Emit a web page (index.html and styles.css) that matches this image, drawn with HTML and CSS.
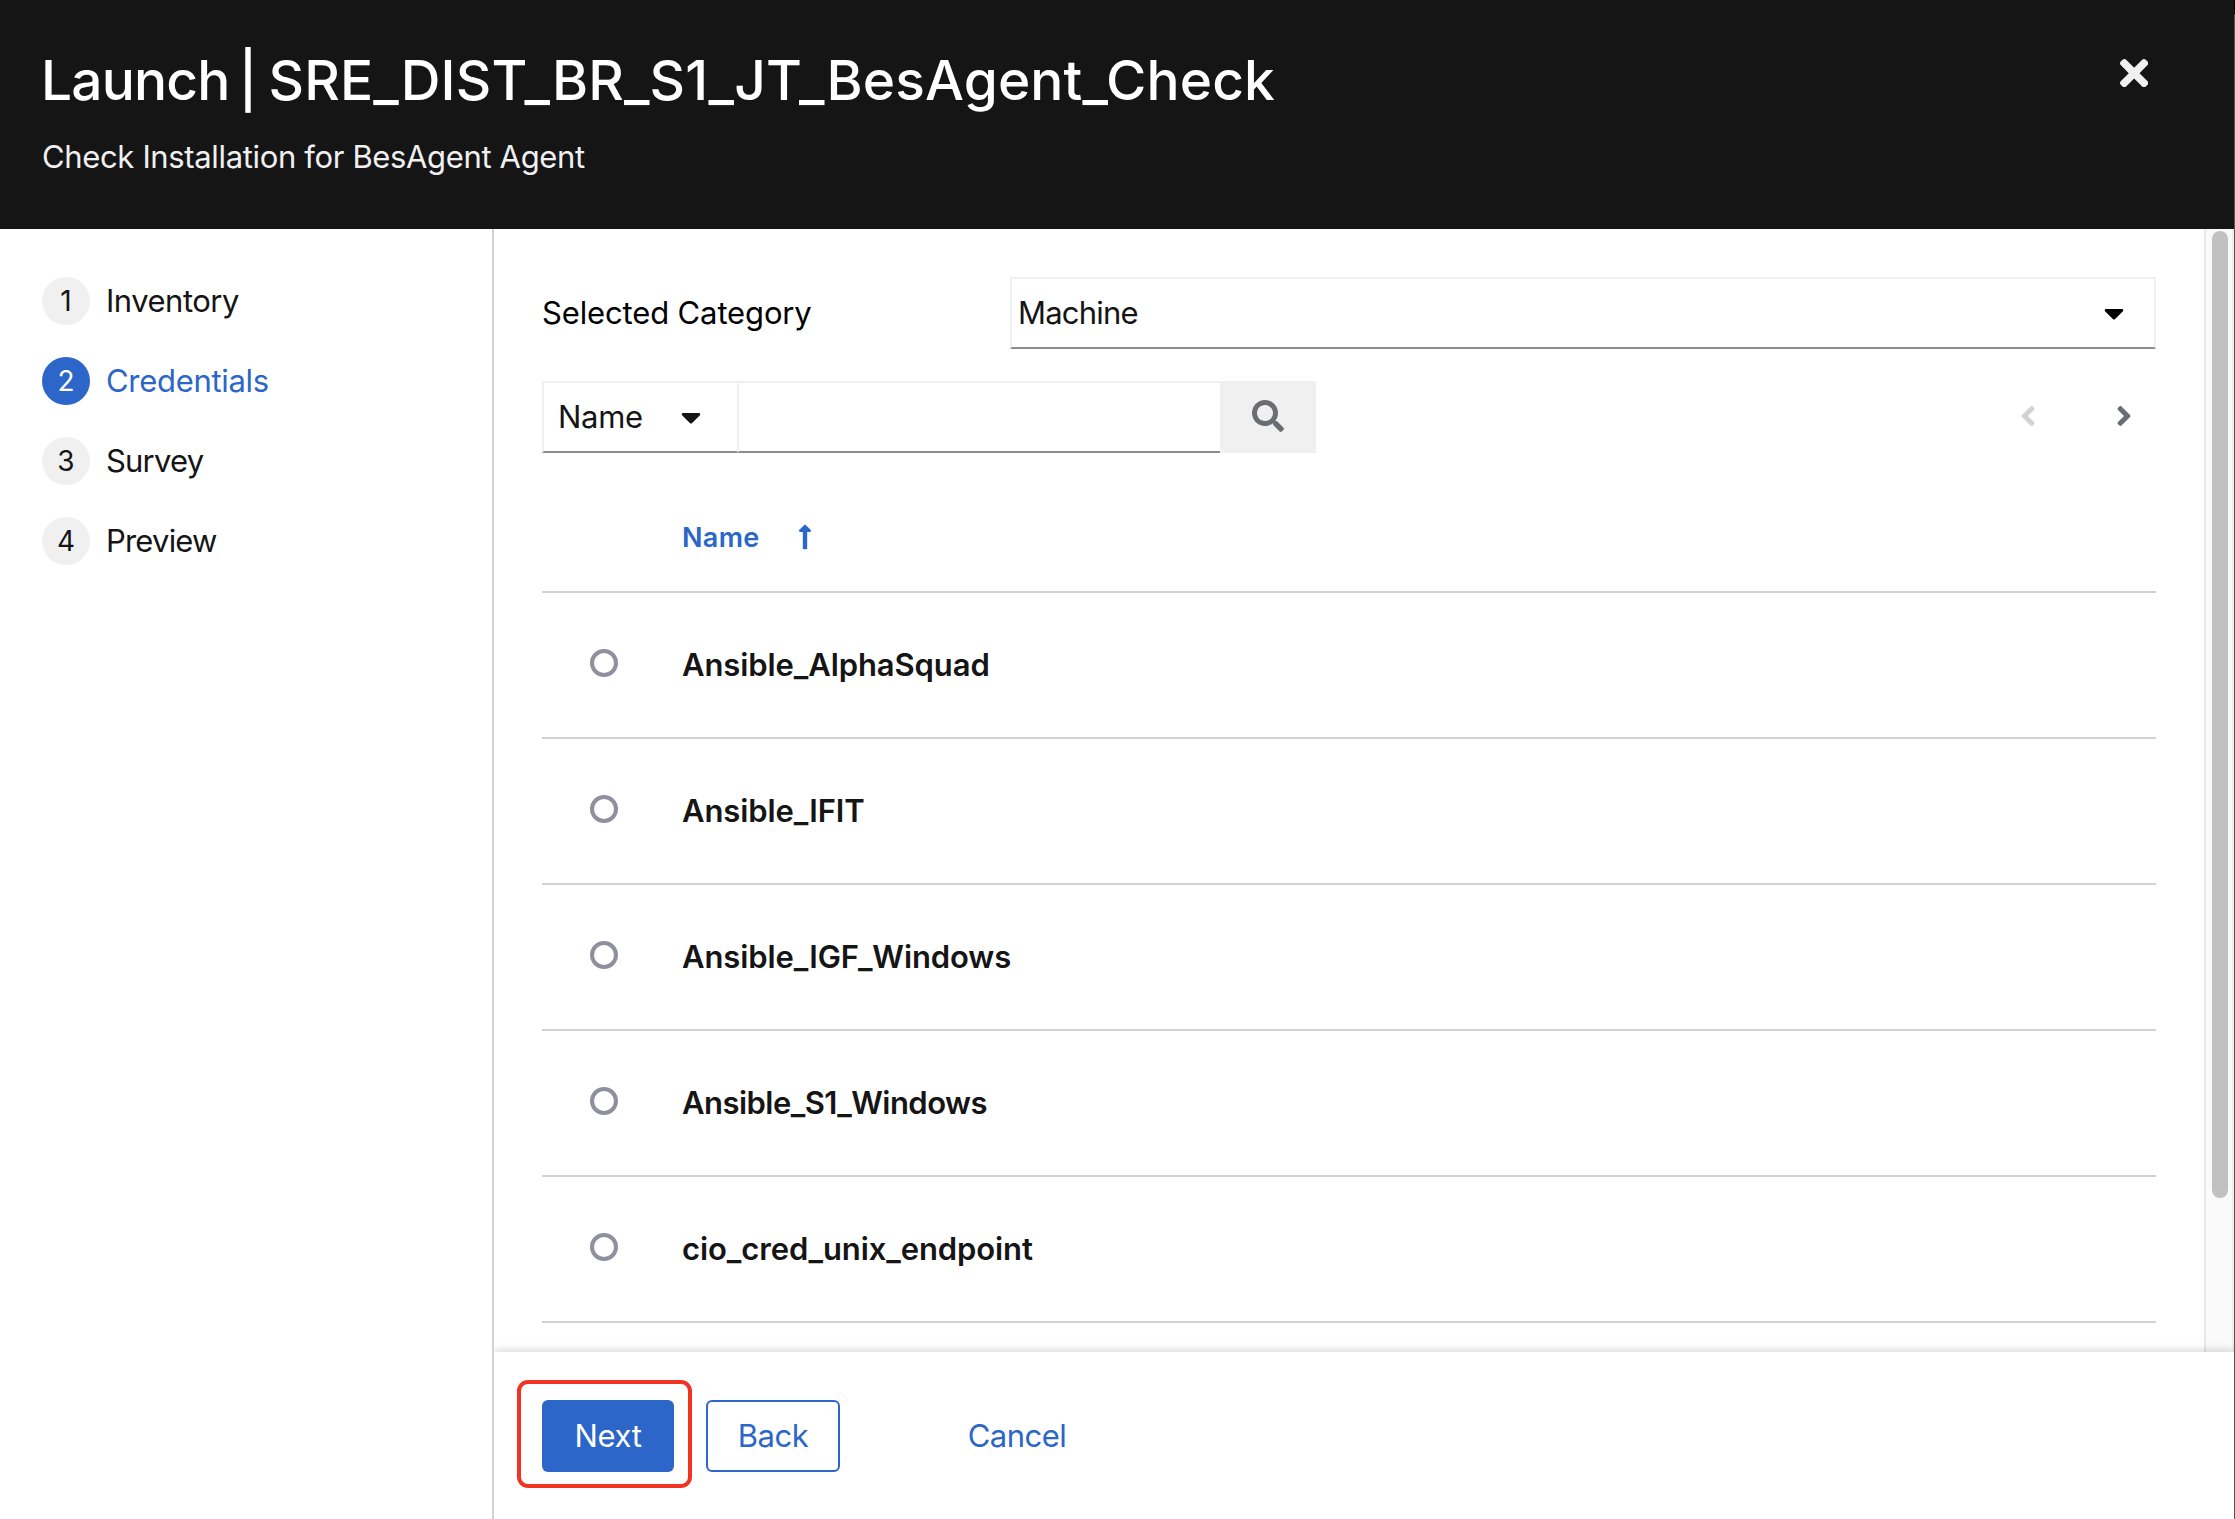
FILE: index.html
```html
<!DOCTYPE html>
<html lang="en">
<head>
<meta charset="utf-8">
<title>Launch | SRE_DIST_BR_S1_JT_BesAgent_Check</title>
<link rel="stylesheet" href="styles.css">
</head>
<body>
<div class="wizard">
  <header class="header">
    <div>
      <h1 class="title"><span class="action">Launch | </span><span class="template">SRE_DIST_BR_S1_JT_BesAgent_Check</span></h1>
      <p class="description">Check Installation for BesAgent Agent</p>
    </div>
    <button class="close" aria-label="Close"><svg viewBox="0 80 352 352" width="28.3" height="28.3"><path fill="currentColor" d="M242.72 256l100.07-100.07c12.28-12.28 12.28-32.19 0-44.48l-22.24-22.24c-12.28-12.28-32.19-12.28-44.48 0L176 189.28 75.93 89.21c-12.28-12.28-32.19-12.28-44.48 0L9.21 111.45c-12.28 12.28-12.28 32.19 0 44.48L109.28 256 9.21 356.07c-12.28 12.28-12.28 32.19 0 44.48l22.24 22.24c12.28 12.28 32.2 12.28 44.48 0L176 322.72l100.07 100.07c12.28 12.28 32.2 12.28 44.48 0l22.24-22.24c12.28-12.28 12.28-32.19 0-44.48L242.72 256z"/></svg></button>
  </header>
  <div class="body">
    <nav class="nav">
      <ol class="steps">
        <li class="step"><span class="num">1</span><span class="tight">Inventory</span></li>
        <li class="step current"><span class="num">2</span><span class="snug">Credentials</span></li>
        <li class="step"><span class="num">3</span><span class="tighter">Survey</span></li>
        <li class="step"><span class="num">4</span><span class="tighter">Preview</span></li>
      </ol>
    </nav>
    <div class="main">
      <div class="scroll">
        <main class="content">
          <div class="category">
            <label class="label">Selected Category</label>
            <div class="select"><span class="tighter">Machine</span><svg viewBox="0 0 320 512" width="20" height="32"><path fill="currentColor" d="M31.3 192h257.3c17.8 0 26.7 21.5 14.1 34.1L174.1 354.8c-7.8 7.8-20.5 7.8-28.3 0L17.2 226.1C4.6 213.5 13.5 192 31.3 192z"/></svg></div>
          </div>
          <div class="toolbar">
            <div class="filter">
              <button class="toggle"><span class="snug">Name</span><svg viewBox="0 0 320 512" width="20" height="32"><path fill="currentColor" d="M31.3 192h257.3c17.8 0 26.7 21.5 14.1 34.1L174.1 354.8c-7.8 7.8-20.5 7.8-28.3 0L17.2 226.1C4.6 213.5 13.5 192 31.3 192z"/></svg></button>
              <input class="search" type="text" aria-label="Search">
              <button class="go" aria-label="Search"><svg viewBox="0 0 512 512" width="32" height="32"><path fill="currentColor" d="M505 442.7L405.3 343c-4.5-4.5-10.6-7-17-7H372c27.6-35.3 44-79.7 44-128C416 93.1 322.9 0 208 0S0 93.1 0 208s93.1 208 208 208c48.3 0 92.7-16.4 128-44v16.3c0 6.4 2.5 12.5 7 17l99.7 99.7c9.4 9.4 24.6 9.4 33.9 0l28.3-28.3c9.4-9.4 9.4-24.6.1-34zM208 336c-70.7 0-128-57.2-128-128 0-70.7 57.2-128 128-128 70.7 0 128 57.2 128 128 0 70.7-57.2 128-128 128z"/></svg></button>
            </div>
            <div class="pager">
              <button class="page disabled" aria-label="Previous page"><svg viewBox="0 0 256 512" width="16" height="32"><path fill="currentColor" d="M31.7 239l136-136c9.4-9.4 24.6-9.4 33.9 0l22.6 22.6c9.4 9.4 9.4 24.6 0 33.9L127.9 256l96.4 96.4c9.4 9.4 9.4 24.6 0 33.9L201.7 409c-9.4 9.4-24.6 9.4-33.9 0l-136-136c-9.5-9.4-9.5-24.6-.1-34z"/></svg></button>
              <button class="page" aria-label="Next page"><svg viewBox="0 0 256 512" width="16" height="32"><path fill="currentColor" d="M224.3 273l-136 136c-9.4 9.4-24.6 9.4-33.9 0l-22.6-22.6c-9.4-9.4-9.4-24.6 0-33.9l96.4-96.4-96.4-96.4c-9.4-9.4-9.4-24.6 0-33.9L54.3 103c9.4-9.4 24.6-9.4 33.9 0l136 136c9.5 9.4 9.5 24.6.1 34z"/></svg></button>
            </div>
          </div>
          <div class="table">
            <div class="thead"><span class="sort">Name</span><svg viewBox="0 0 256 512" width="14" height="28"><path fill="currentColor" d="M88 166.059V468c0 6.627 5.373 12 12 12h56c6.627 0 12-5.373 12-12V166.059h46.059c21.382 0 32.09-25.851 16.971-40.971l-86.059-86.059c-9.373-9.373-24.569-9.373-33.941 0l-86.059 86.059c-15.119 15.119-4.411 40.971 16.971 40.971H88z"/></svg></div>
            <label class="row"><span class="radio"></span><span class="name">Ansible_AlphaSquad</span></label>
            <label class="row"><span class="radio"></span><span class="name">Ansible_IFIT</span></label>
            <label class="row"><span class="radio"></span><span class="name">Ansible_IGF_Windows</span></label>
            <label class="row"><span class="radio"></span><span class="name tight">Ansible_S1_Windows</span></label>
            <label class="row"><span class="radio"></span><span class="name">cio_cred_unix_endpoint</span></label>
          </div>
        </main>
        <div class="scrollbar"><div class="thumb"></div></div>
      </div>
      <footer class="footer">
        <div class="highlight"><button class="btn primary snug">Next</button></div>
        <button class="btn secondary tight">Back</button>
        <button class="btn link tight">Cancel</button>
      </footer>
    </div>
  </div>
</div>
<div class="edge"></div>
</body>
</html>
```
FILE: styles.css
```css
* { box-sizing: border-box; }

body {
  margin: 0;
  width: 2235px;
  height: 1519px;
  overflow: hidden;
  display: flex;
  background: #fff;
  color: #151515;
  font: 400 31px/48px Inter, "Liberation Sans", sans-serif;
}

button {
  margin: 0;
  padding: 0;
  border: 0;
  background: none;
  color: inherit;
  font: inherit;
}

svg { display: block; flex: none; }

.snug { letter-spacing: -0.3px; }
.tight { letter-spacing: -0.5px; }
.tighter { letter-spacing: -0.8px; }

.wizard { flex: 1; display: flex; flex-direction: column; }

.edge {
  width: 1px;
  border-top: 14px solid #000;
  background: #555;
}

/* Header */
.header {
  height: 229px;
  flex: none;
  display: flex;
  justify-content: space-between;
  align-items: flex-start;
  padding: 46px 86px 0 41px;
  background: #151515;
  color: #fff;
}
.title {
  margin: 0;
  font-size: 55px;
  font-weight: 500;
  line-height: 68px;
}
.action { letter-spacing: -0.8px; word-spacing: -5px; }
.template { margin-left: 3px; letter-spacing: 0.16px; }
.description {
  margin: 19px 0 0 1px;
  color: #f0f0f0;
  letter-spacing: -0.35px;
}
.close { padding-top: 13px; color: #f0f0f0; }

/* Steps */
.body { flex: 1; display: flex; min-height: 0; }
.nav { width: 494px; border-right: 2px solid #d2d2d2; }
.steps {
  margin: 0;
  padding: 48px 0 0 42px;
  list-style: none;
  display: flex;
  flex-direction: column;
  gap: 32px;
}
.step { display: flex; gap: 16px; height: 48px; }
.num {
  width: 48px;
  border-radius: 50%;
  background: #f0f0f0;
  font-size: 28px;
  text-align: center;
}
.current { color: #2b66c8; }
.current .num { background: #2b66c8; color: #fff; }

/* Main area */
.main { flex: 1; display: flex; flex-direction: column; min-width: 0; }
.scroll { height: 1123px; display: flex; overflow: hidden; }
.content { flex: 1; padding: 48px 48px 0; }

.category { display: flex; justify-content: space-between; align-items: center; color: #000; }
.label { letter-spacing: -0.14px; }
.select {
  width: 1146px;
  height: 72px;
  padding: 0 30px 0 6px;
  display: flex;
  align-items: center;
  justify-content: space-between;
  border: 2px solid #f0f0f0;
  border-bottom-color: #8a8d90;
}
.select span { color: #151515; }

.toolbar { display: flex; justify-content: space-between; margin-top: 32px; }
.filter { display: flex; height: 72px; }
.toggle {
  width: 196px;
  padding: 0 36px 0 14px;
  display: flex;
  align-items: center;
  justify-content: space-between;
  border: 2px solid #f0f0f0;
  border-right-width: 1px;
  border-bottom-color: #8a8d90;
}
.search {
  width: 482px;
  border: 2px solid #f0f0f0;
  border-left-width: 1px;
  border-right: 0;
  border-bottom-color: #8a8d90;
  border-radius: 0;
  background: #fff;
}
.go { width: 96px; padding: 0 32px; background: #f0f0f0; color: #6a6e73; }
.pager { display: flex; }
.page { width: 96px; padding-left: 56px; color: #6a6e73; }
.page.disabled { color: #d2d2d2; }
.go svg, .page svg { margin-top: -2px; }

/* Table */
.thead {
  height: 140px;
  padding: 32px 0 0 140px;
  display: flex;
  align-items: center;
  gap: 38px;
  color: #2b66c8;
  border-bottom: 2px solid #d2d2d2;
}
.thead svg { margin-top: -2px; }
.sort { font-size: 27px; font-weight: 600; letter-spacing: 0.33px; }
.row {
  height: 146px;
  padding-left: 48px;
  display: flex;
  align-items: center;
  gap: 64px;
  border-bottom: 2px solid #d2d2d2;
}
.radio {
  width: 28px;
  height: 28px;
  margin-top: -4px;
  border: 4px solid #8f8f9d;
  border-radius: 50%;
}
.name { font-weight: 600; letter-spacing: -0.1px; }
.name.tight { letter-spacing: -0.54px; }

/* Scrollbar */
.scrollbar {
  width: 30px;
  padding: 2px 4px 0 6px;
  border-left: 2px solid #e8e8e8;
  border-right: 2px solid #ededed;
  background: #fafafa;
}
.thumb { width: 16px; height: 967px; border-radius: 8px; background: #c1c1c1; }

/* Footer */
.footer {
  flex: 1;
  display: flex;
  align-items: flex-start;
  padding: 28px 0 0 23px;
  background: #fff;
  box-shadow: 0 -2px 8px rgba(3, 3, 3, 0.16);
  clip-path: inset(-20px 0 0 0);
}
.highlight {
  width: 175px;
  height: 108px;
  padding: 16px 0 0 21px;
  border: 4px solid #f03323;
  border-radius: 11px;
}
.btn { height: 72px; border-radius: 6px; }
.primary { display: block; width: 132px; background: #2b66c8; color: #fff; }
.secondary {
  width: 134px;
  margin: 20px 0 0 14px;
  border: 2px solid #2b66c8;
  color: #2b66c8;
}
.link { width: 162px; margin: 20px 0 0 96px; color: #2b66c8; }
```
